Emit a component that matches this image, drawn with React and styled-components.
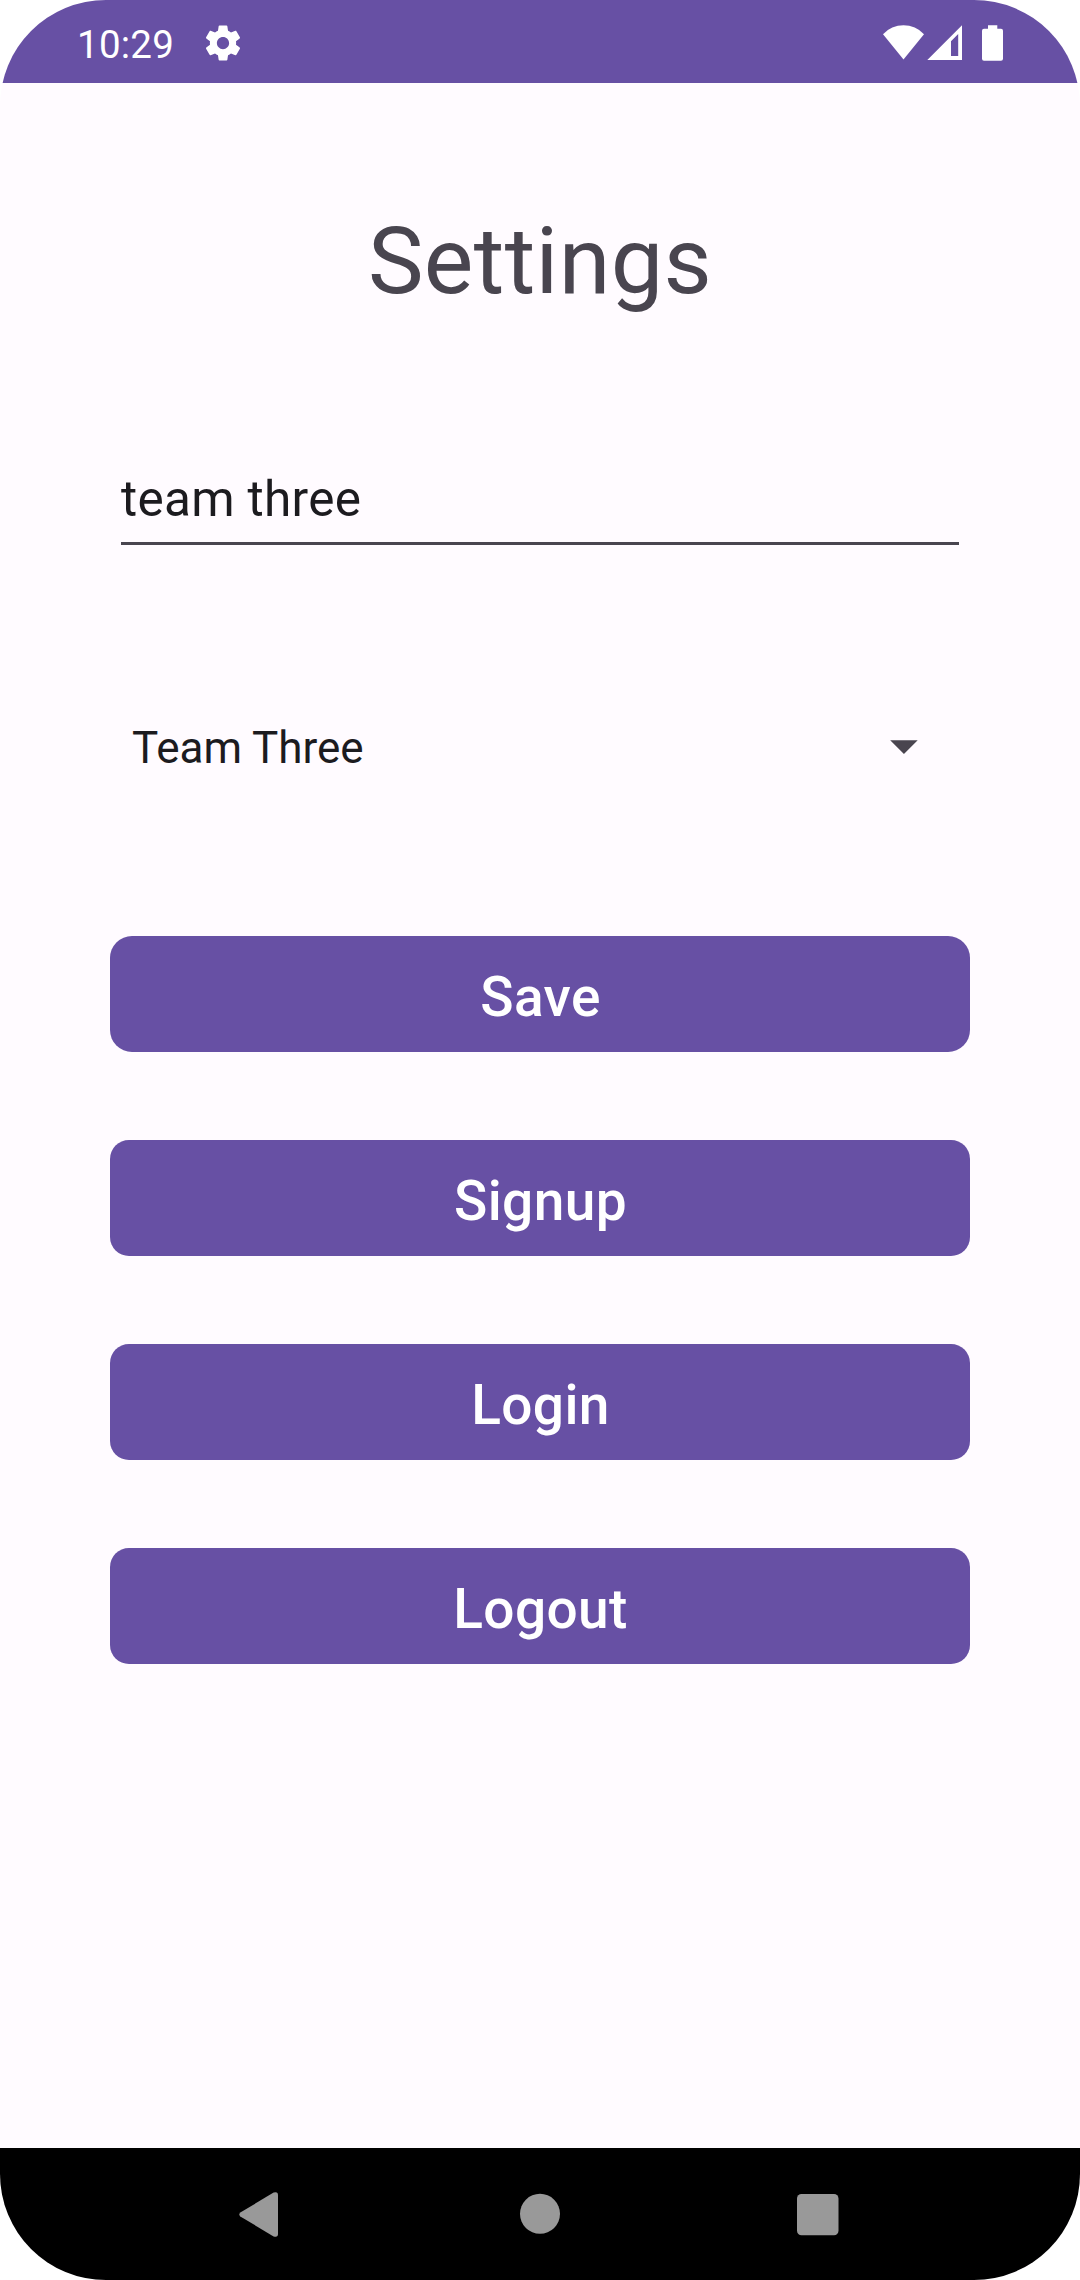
import React from "react";
import styled, { createGlobalStyle } from "styled-components";

const Global = createGlobalStyle`
  *, *::before, *::after { box-sizing: border-box; }
  body {
    margin: 0;
    background: #ffffff;
    font-family: Roboto, "Liberation Sans", sans-serif;
  }
`;

const Screen = styled.div`
  width: 1080px;
  height: 2280px;
  display: flex;
  flex-direction: column;
  overflow: hidden;
  border-radius: 106px;
  background: #fffbff;
`;

const StatusBar = styled.header`
  height: 83px;
  flex: none;
  display: flex;
  justify-content: space-between;
  padding: 0 77px 0 77px;
  background: #6750a4;
  color: #ffffff;
`;

const StatusGroup = styled.div`
  display: flex;
  align-items: flex-start;
`;

const Clock = styled.span`
  width: 125px;
  padding-top: 22px;
  font-size: 38.5px;
  line-height: 45px;
  letter-spacing: 0.25px;
`;

const StatusIcon = styled.svg`
  display: block;
  flex: none;
  margin-top: ${(p) => p.$top}px;
  margin-left: ${(p) => p.$left || 0}px;
  fill: currentColor;
`;

const Content = styled.main`
  flex: 1;
  display: flex;
  flex-direction: column;
  padding: 123px 110px 0;
`;

const Title = styled.h1`
  margin: 0;
  color: #49454f;
  font-size: 93.5px;
  font-weight: 400;
  line-height: 110px;
  letter-spacing: 0.35px;
  text-align: center;
`;

const NameField = styled.input`
  height: 91px;
  margin: 138px 11px 0;
  padding: 2px 0 0;
  border: 0;
  border-bottom: 3px solid #49454f;
  outline: 0;
  background: transparent;
  color: #1c1b1f;
  font-family: inherit;
  font-size: 49.5px;
  line-height: 58px;
  letter-spacing: 0.3px;
`;

const TeamSelect = styled.div`
  height: 66px;
  margin-top: 169px;
  padding: 0 52px 0 22px;
  display: flex;
  align-items: center;
  justify-content: space-between;
  color: #1c1b1f;
  font-size: 44px;
  line-height: 52px;
`;

const TeamName = styled.span`
  padding-top: 2px;
`;

const Arrow = styled.svg`
  display: block;
  fill: #49454f;
`;

const Actions = styled.div`
  display: flex;
  flex-direction: column;
  gap: 88px;
  margin-top: 156px;
`;

const ActionButton = styled.button`
  height: 116px;
  display: flex;
  align-items: center;
  justify-content: center;
  padding: 6px 0 0 1px;
  border: 0;
  border-radius: ${(p) => p.$radius}px;
  background: #6750a4;
  color: #ffffff;
  font-family: inherit;
  font-size: 55px;
  font-weight: 500;
  line-height: 64px;
  letter-spacing: 0.39px;
`;

const NavBar = styled.nav`
  height: 132px;
  flex: none;
  display: flex;
  justify-content: space-between;
  padding: 44px 241px 0 239px;
  background: #000000;
`;

const NavIcon = styled.svg`
  display: block;
  flex: none;
  fill: #999999;
`;

const actions = [
  { label: "Save", radius: 22 },
  { label: "Signup", radius: 19 },
  { label: "Login", radius: 19 },
  { label: "Logout", radius: 19 },
];

export default function App() {
  return (
    <>
      <Global />
      <Screen>
        <StatusBar>
          <StatusGroup>
            <Clock>10:29</Clock>
            <StatusIcon $top={22.3} $left={0.3} width="42" height="42" viewBox="0 0 24 24">
              <path d="M19.43 12.98c.04-.32.07-.64.07-.98s-.03-.66-.07-.98l2.11-1.65c.19-.15.24-.42.12-.64l-2-3.46c-.12-.22-.39-.3-.61-.22l-2.49 1c-.52-.4-1.08-.73-1.69-.98l-.38-2.65C14.46 2.18 14.25 2 14 2h-4c-.25 0-.46.18-.49.42l-.38 2.65c-.61.25-1.17.59-1.69.98l-2.49-1c-.23-.09-.49 0-.61.22l-2 3.46c-.13.22-.07.49.12.64l2.11 1.65c-.04.32-.07.65-.07.98s.03.66.07.98l-2.11 1.65c-.19.15-.24.42-.12.64l2 3.46c.12.22.39.3.61.22l2.49-1c.52.4 1.08.73 1.69.98l.38 2.65c.03.24.24.42.49.42h4c.25 0 .46-.18.49-.42l.38-2.65c.61-.25 1.17-.59 1.69-.98l2.49 1c.23.09.49 0 .61-.22l2-3.46c.12-.22.07-.49-.12-.64l-2.11-1.65zM12 15.5c-1.93 0-3.5-1.57-3.5-3.5s1.57-3.5 3.5-3.5 3.5 1.57 3.5 3.5-1.57 3.5-3.5 3.5z" />
            </StatusIcon>
          </StatusGroup>
          <StatusGroup>
            <StatusIcon $top={25} width="41" height="35" viewBox="0 0 41 35">
              <path d="M0 9.2A28 28 0 0 1 41 9.2L20.5 34.6Z" />
            </StatusIcon>
            <StatusIcon $top={25} $left={3} width="35" height="35" viewBox="0 0 35 35">
              <path fillRule="evenodd" d="M0.3 35L35 0.3V35ZM24 31H31.2V9L24 16.2Z" />
            </StatusIcon>
            <StatusIcon $top={25} $left={20} width="21" height="36" viewBox="0 0 21 36">
              <path d="M6 0.3H15.3V3.8H19Q21 3.8 21 5.8V33.8Q21 35.8 19 35.8H2Q0 35.8 0 33.8V5.8Q0 3.8 2 3.8H6Z" />
            </StatusIcon>
          </StatusGroup>
        </StatusBar>

        <Content>
          <Title>Settings</Title>
          <NameField defaultValue="team three" spellCheck={false} aria-label="Name" />
          <TeamSelect>
            <TeamName>Team Three</TeamName>
            <Arrow width="28" height="14" viewBox="0 0 28 14">
              <path d="M0.2 0.3H27.7L13.95 14Z" />
            </Arrow>
          </TeamSelect>
          <Actions>
            {actions.map(({ label, radius }) => (
              <ActionButton key={label} $radius={radius}>{label}</ActionButton>
            ))}
          </Actions>
        </Content>

        <NavBar>
          <NavIcon width="41" height="45" viewBox="0 0 41 45">
            <path d="M1.3 20.6L34.6 0.6Q39 -1 39 3.2V41.8Q39 46 34.6 44.4L1.3 24.4Q-0.7 22.5 1.3 20.6Z" />
          </NavIcon>
          <NavIcon width="42" height="45" viewBox="0 0 42 45">
            <circle cx="22" cy="21.8" r="20" />
          </NavIcon>
          <NavIcon width="42" height="45" viewBox="0 0 42 45">
            <rect x="0" y="2" width="41.5" height="41.3" rx="4.5" />
          </NavIcon>
        </NavBar>
      </Screen>
    </>
  );
}
